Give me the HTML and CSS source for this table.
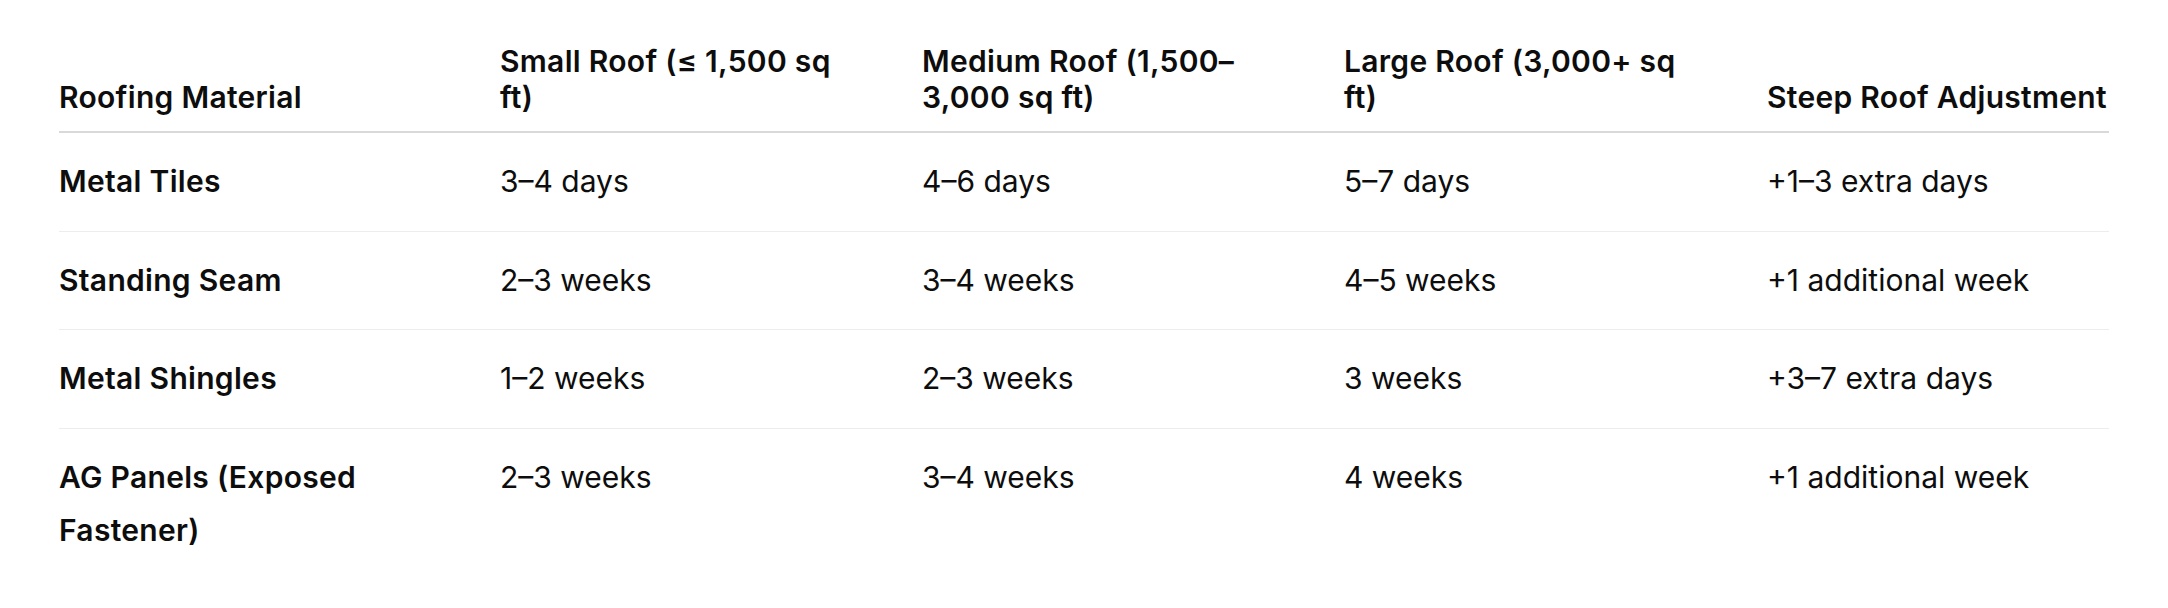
FILE: index.html
```html
<!DOCTYPE html>
<html lang="en">
<head>
<meta charset="utf-8">
<title>Roofing Timeline</title>
<link rel="stylesheet" href="styles.css">
</head>
<body>
<div class="wrap">
  <table class="roof-table">
    <colgroup>
      <col class="c1">
      <col class="c2">
      <col class="c3">
      <col class="c4">
      <col class="c5">
    </colgroup>
    <thead>
      <tr>
        <th>Roofing Material</th>
        <th>Small Roof (≤ 1,500 sq ft)</th>
        <th>Medium Roof (1,500–3,000 sq ft)</th>
        <th>Large Roof (3,000+ sq ft)</th>
        <th>Steep Roof Adjustment</th>
      </tr>
    </thead>
    <tbody>
      <tr>
        <td class="name">Metal Tiles</td>
        <td>3–4 days</td>
        <td>4–6 days</td>
        <td>5–7 days</td>
        <td>+1–3 extra days</td>
      </tr>
      <tr>
        <td class="name">Standing Seam</td>
        <td>2–3 weeks</td>
        <td>3–4 weeks</td>
        <td>4–5 weeks</td>
        <td>+1 additional week</td>
      </tr>
      <tr>
        <td class="name">Metal Shingles</td>
        <td>1–2 weeks</td>
        <td>2–3 weeks</td>
        <td>3 weeks</td>
        <td>+3–7 extra days</td>
      </tr>
      <tr>
        <td class="name">AG Panels (Exposed Fastener)</td>
        <td>2–3 weeks</td>
        <td>3–4 weeks</td>
        <td>4 weeks</td>
        <td>+1 additional week</td>
      </tr>
    </tbody>
  </table>
</div>
</body>
</html>
```
FILE: styles.css
```css
html, body {
  margin: 0;
  padding: 0;
  background: #ffffff;
}
body {
  font-family: Inter, "Noto Sans", "Liberation Sans", sans-serif;
  color: #0d0d0d;
  font-size: 30px;
}
.wrap {
  padding: 33px 0 0 59px;
}
.roof-table {
  border-collapse: collapse;
  table-layout: fixed;
  width: 2050px;
}
.c1 { width: 441px; }
.c2 { width: 422px; }
.c3 { width: 422px; }
.c4 { width: 423px; }
.c5 { width: 342px; }

.roof-table th {
  text-align: left;
  vertical-align: bottom;
  font-weight: 600;
  line-height: 36px;
  padding: 10px 77px 16px 0;
  border-bottom: 2px solid #d9d9d9;
  letter-spacing: 0.01em;
}
.roof-table td {
  text-align: left;
  vertical-align: top;
  font-weight: 400;
  line-height: 53.5px;
  padding: 22px 77px 22px 0;
  border-bottom: 1px solid #ededed;
}
.roof-table th:last-child,
.roof-table td:last-child {
  padding-right: 0;
  white-space: nowrap;
}
.roof-table tbody tr:last-child td {
  border-bottom: none;
}
.roof-table td.name {
  font-weight: 600;
  letter-spacing: 0.01em;
}
```
